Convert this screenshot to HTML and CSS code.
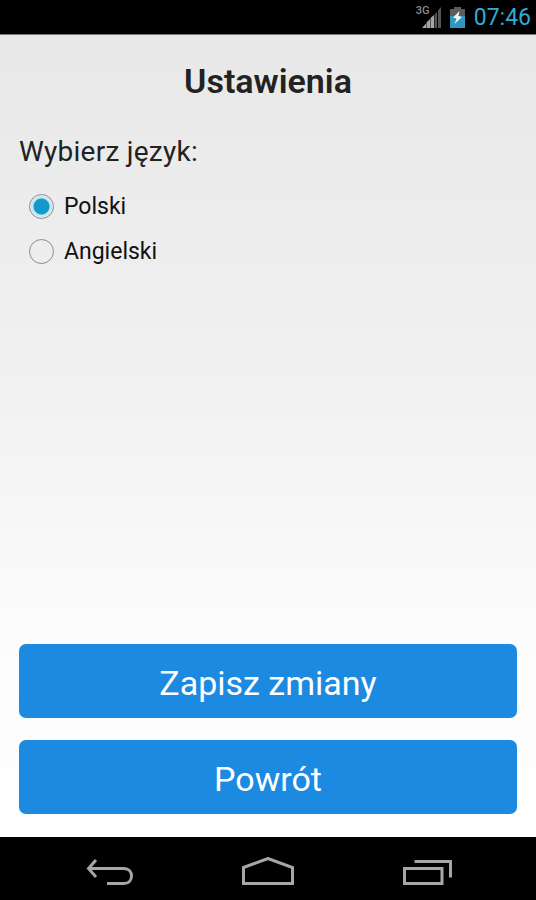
FILE: index.html
```html
<!DOCTYPE html>
<html lang="pl">
<head>
    <meta charset="UTF-8">
    <meta name="viewport" content="width=device-width, initial-scale=1.0">
    <title>Ustawienia</title>
    <link rel="stylesheet" href="styles.css">
</head>
<body>
    <div class="screen">
        <div class="status-bar">
            <div class="signal">
                <span class="network">3G</span>
                <svg width="19" height="21" viewBox="0 0 19 21">
                    <path d="M0 21L4 16.5V21ZM4.500 21V15.500L8 12V21ZM8.500 21V11L12 8V21Z" fill="#a5a5a5"/>
                    <path d="M12.500 21V7.500L15 5V21ZM16 21V3.500L19 0V21Z" fill="#555"/>
                </svg>
            </div>
            <svg class="battery" width="15" height="21" viewBox="0 0 15 21">
                <path d="M4 0H11V2H15V10H0V2H4Z" fill="#5c5c5c"/>
                <path d="M0 9H15V21H0Z" fill="#3196bd"/>
                <path d="M9.500 4L3 10.500L6.500 11.500L4.500 17L12 10L8.500 9Z" fill="#f2f2f2"/>
            </svg>
            <span class="clock">07:46</span>
        </div>

        <div class="content">
            <h1>Ustawienia</h1>

            <div class="section-label">Wybierz język:</div>

            <div class="radio-group">
                <label class="radio">
                    <input type="radio" name="language" checked>
                    <span>Polski</span>
                </label>
                <label class="radio">
                    <input type="radio" name="language">
                    <span>Angielski</span>
                </label>
            </div>

            <div class="buttons">
                <button type="button">Zapisz zmiany</button>
                <button type="button">Powrót</button>
            </div>
        </div>

        <div class="nav-bar">
            <svg width="50" height="30" viewBox="0 0 50 30">
                <path d="M11 3L3.500 11.500L11 20M3.500 11.500H39C49 11.500 49 26.500 39 26.500H22"/>
            </svg>
            <svg width="54" height="30" viewBox="0 0 54 30">
                <path d="M2.500 10.500L27 1.500L51.500 10.500V26.500H2.500Z"/>
            </svg>
            <svg width="54" height="30" viewBox="0 0 54 30">
                <path d="M3.500 11.500H41V26.500H3.500ZM13.500 4.500H49.500V20.500"/>
            </svg>
        </div>
    </div>
</body>
</html>
```

FILE: styles.css
```css
* {
    margin: 0;
    padding: 0;
    box-sizing: border-box;
}

body {
    font-family: Roboto, sans-serif;
    background: #000;
    color: #222;
}

.screen {
    display: flex;
    flex-direction: column;
    height: 100vh;
    min-height: 600px;
}

.status-bar {
    display: flex;
    align-items: center;
    justify-content: flex-end;
    height: 34px;
    padding-right: 5px;
    background: #000;
}

.signal {
    position: relative;
    margin-right: 9px;
    height: 21px;
}

.signal svg,
.battery,
.nav-bar svg {
    display: block;
}

.network {
    position: absolute;
    top: -2px;
    left: -6px;
    font-size: 11px;
    line-height: 12px;
    font-weight: 500;
    color: #8a8a8a;
}

.battery {
    margin-right: 9px;
}

.clock {
    padding-top: 2px;
    font-size: 23px;
    line-height: 32px;
    color: #35a9d6;
}

.content {
    flex: 1;
    display: flex;
    flex-direction: column;
    padding: 26px 19px 23px;
    background: linear-gradient(#e8e8e8, #f0f0f0 40%, #fcfcfc 75%, #fff);
    border-top: 1px solid #777;
}

h1 {
    font-size: 34px;
    line-height: 40px;
    font-weight: 600;
    text-align: center;
}

.section-label {
    margin-top: 35px;
    font-size: 28px;
    line-height: 32px;
    letter-spacing: 0.25px;
}

.radio-group {
    display: flex;
    flex-direction: column;
    gap: 15px;
    margin-top: 23px;
    padding-left: 10px;
}

.radio {
    display: flex;
    align-items: center;
    gap: 10px;
    height: 30px;
    font-size: 23px;
    color: #111;
}

input[type="radio"] {
    appearance: none;
    width: 25px;
    height: 25px;
    border: 1.5px solid #8c8c8c;
    border-radius: 50%;
}

input[type="radio"]:checked {
    background: radial-gradient(circle, #1499cb 0 7.5px, #c9e7f1 8.5px 10px, #e6eff2 11px);
}

.buttons {
    display: flex;
    flex-direction: column;
    gap: 22px;
    margin-top: auto;
}

button {
    height: 74px;
    padding-top: 3px;
    border: none;
    border-radius: 7px;
    background: #1c8ae0;
    color: #fff;
    font-family: inherit;
    font-size: 34px;
}

.nav-bar {
    display: flex;
    align-items: center;
    justify-content: space-between;
    height: 63px;
    padding: 7px 81px 0 85px;
    background: #000;
}

.nav-bar path {
    fill: none;
    stroke: #a6a6a6;
    stroke-width: 3;
}
```
